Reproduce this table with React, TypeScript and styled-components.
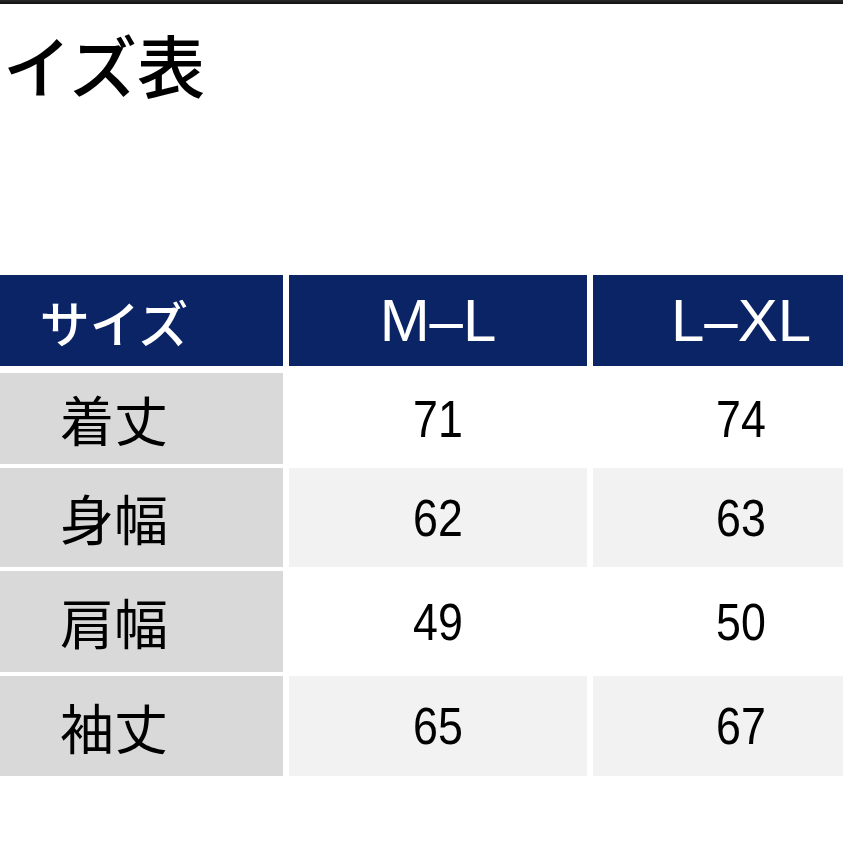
import React from "react";
import styled, { createGlobalStyle } from "styled-components";

const GlobalStyle = createGlobalStyle`
  html, body {
    margin: 0;
    padding: 0;
    background: #ffffff;
    overflow: hidden;
  }
  body {
    font-family: "Noto Sans CJK JP", "Noto Sans", sans-serif;
  }
`;

const Page = styled.div`
  width: 843px;
  height: 843px;
  overflow: hidden;
  display: flex;
  flex-direction: column;
  background: #ffffff;
`;

const TopBar = styled.div`
  height: 4px;
  background: linear-gradient(#2a2a2a, #111111);
  flex: none;
`;

const Title = styled.h1`
  margin: 26px 0 0 3px;
  font-family: "Noto Sans CJK JP", sans-serif;
  font-size: 68px;
  line-height: 68px;
  font-weight: 500;
  color: #000000;
  letter-spacing: 0;
`;

const Table = styled.div`
  margin-top: 177px;
  display: flex;
  flex-direction: column;
  gap: 4px;
  width: 900px;
`;

const Row = styled.div<{ $h: number; $after?: number }>`
  display: grid;
  grid-template-columns: 283px 298px 296px;
  column-gap: 6px;
  height: ${(p) => p.$h}px;
  margin-bottom: ${(p) => p.$after ?? 0}px;
`;

const HeaderCell = styled.div<{ $latin?: boolean; $label?: boolean }>`
  background: #0b2466;
  color: #ffffff;
  display: flex;
  align-items: center;
  justify-content: center;
  padding-right: ${(p) => (p.$label ? 55 : 0)}px;
  font-family: ${(p) =>
    p.$latin
      ? `"Liberation Sans", Arial, sans-serif`
      : `"Noto Sans CJK JP", sans-serif`};
  font-size: ${(p) => (p.$latin ? 60 : 50)}px;
  font-weight: ${(p) => (p.$latin ? 400 : 500)};
`;

const LabelCell = styled.div`
  background: #d9d9d9;
  color: #000000;
  display: flex;
  align-items: center;
  justify-content: center;
  padding-right: 55px;
  font-family: "Noto Sans CJK JP", sans-serif;
  font-size: 54px;
  font-weight: 400;
`;

const DataCell = styled.div<{ $shade: boolean }>`
  background: ${(p) => (p.$shade ? "#f2f2f2" : "#ffffff")};
  color: #000000;
  display: flex;
  align-items: center;
  justify-content: center;
  font-family: "Liberation Sans", Arial, sans-serif;
  font-size: 52px;
`;

const Digits = styled.span`
  display: inline-block;
  transform: scaleX(0.86);
`;

const rows = [
  { label: "着丈", ml: "71", lxl: "74", h: 91 },
  { label: "身幅", ml: "62", lxl: "63", h: 99 },
  { label: "肩幅", ml: "49", lxl: "50", h: 101 },
  { label: "袖丈", ml: "65", lxl: "67", h: 100 },
];

export default function App() {
  return (
    <>
      <GlobalStyle />
      <Page>
        <TopBar />
        <Title>イズ表</Title>
        <Table>
          <Row $h={91} $after={3}>
            <HeaderCell $label>サイズ</HeaderCell>
            <HeaderCell $latin>M–L</HeaderCell>
            <HeaderCell $latin>L–XL</HeaderCell>
          </Row>
          {rows.map((r, i) => (
            <Row key={r.label} $h={r.h}>
              <LabelCell>{r.label}</LabelCell>
              <DataCell $shade={i % 2 === 1}>
                <Digits>{r.ml}</Digits>
              </DataCell>
              <DataCell $shade={i % 2 === 1}>
                <Digits>{r.lxl}</Digits>
              </DataCell>
            </Row>
          ))}
        </Table>
      </Page>
    </>
  );
}
